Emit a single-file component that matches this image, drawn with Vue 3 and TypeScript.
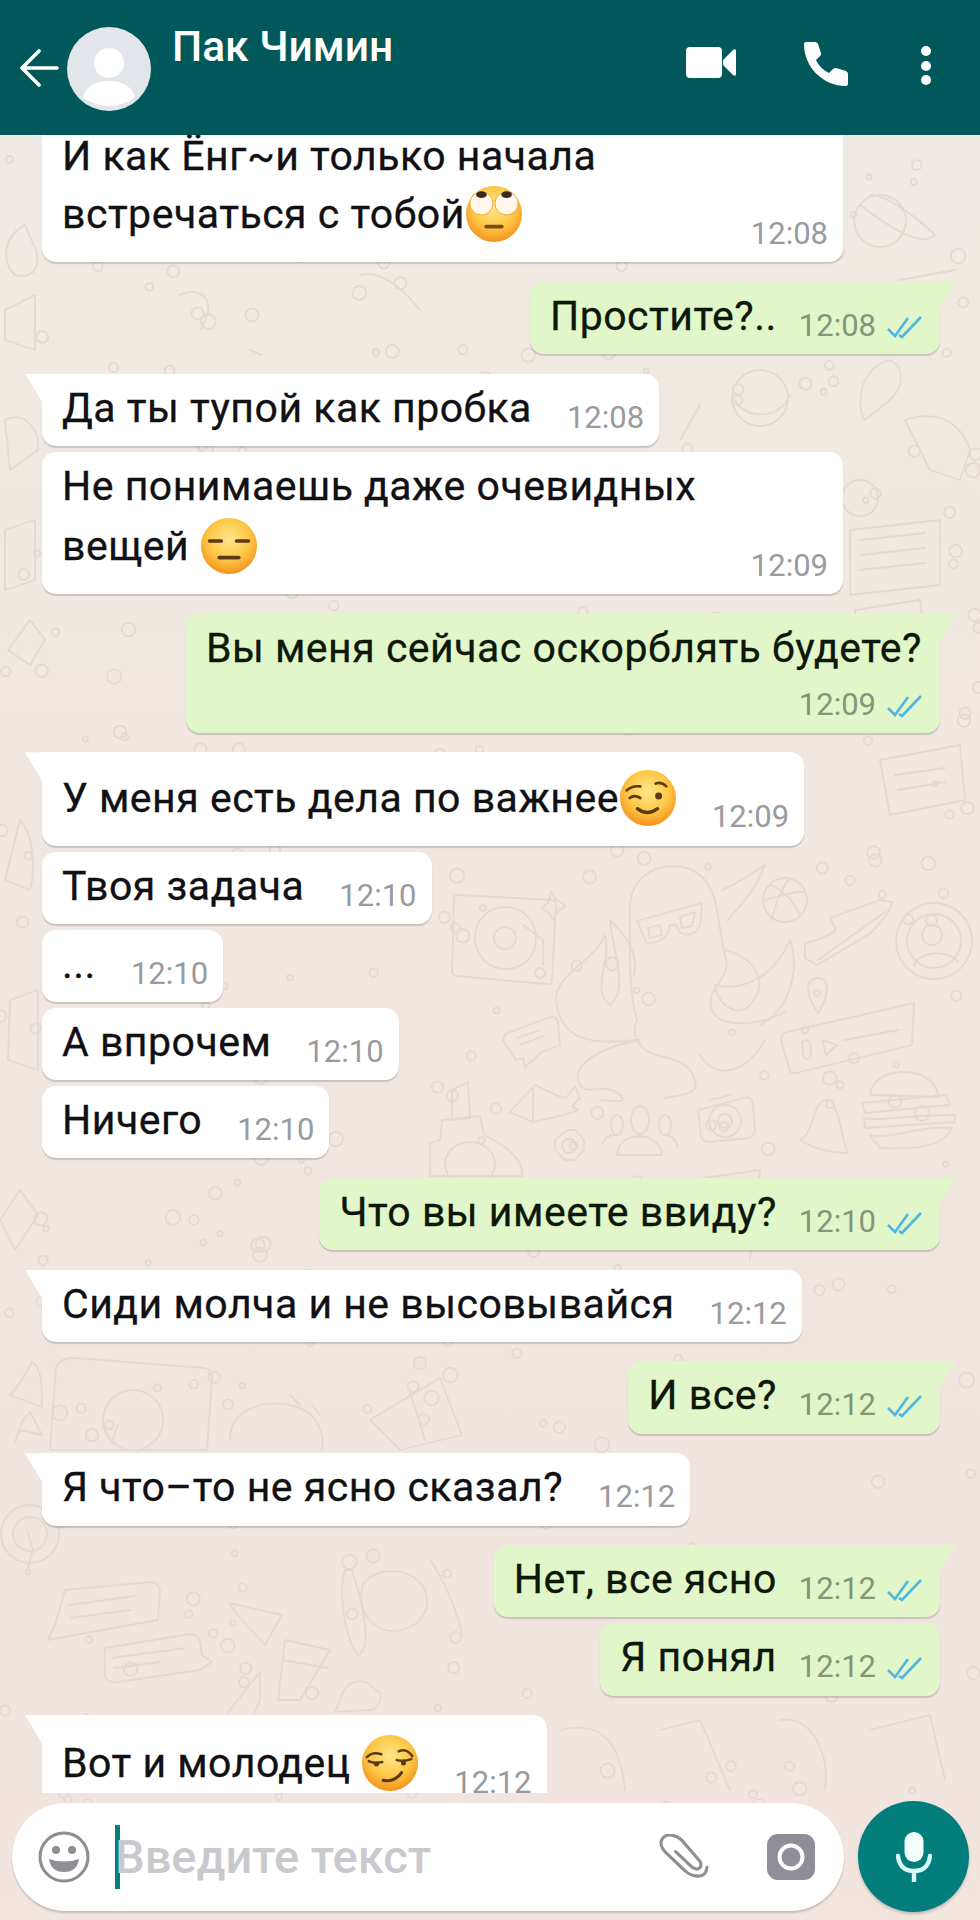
<script setup lang="ts">
type Face = 'roll' | 'flat' | 'wink' | 'smirk'

interface Message {
  id: number
  side: 'in' | 'out'
  tail?: boolean
  lines: string[]
  face?: Face
  time: string
  variant?: 'wide' | 'stack' | 'emoji' | 'last' | 'cut'
}

const messages: Message[] = [
  { id: 1, side: 'in', lines: ['И как Ёнг~и только начала', 'встречаться с тобой'], face: 'roll', time: '12:08', variant: 'cut' },
  { id: 2, side: 'out', tail: true, lines: ['Простите?..'], time: '12:08' },
  { id: 3, side: 'in', tail: true, lines: ['Да ты тупой как пробка'], time: '12:08' },
  { id: 4, side: 'in', lines: ['Не понимаешь даже очевидных', 'вещей '], face: 'flat', time: '12:09', variant: 'wide' },
  { id: 5, side: 'out', tail: true, lines: ['Вы меня сейчас оскорблять будете?'], time: '12:09', variant: 'stack' },
  { id: 6, side: 'in', tail: true, lines: ['У меня есть дела по важнее'], face: 'wink', time: '12:09', variant: 'emoji' },
  { id: 7, side: 'in', lines: ['Твоя задача'], time: '12:10' },
  { id: 8, side: 'in', lines: ['...'], time: '12:10' },
  { id: 9, side: 'in', lines: ['А впрочем'], time: '12:10' },
  { id: 10, side: 'in', lines: ['Ничего'], time: '12:10' },
  { id: 11, side: 'out', tail: true, lines: ['Что вы имеете ввиду?'], time: '12:10' },
  { id: 12, side: 'in', tail: true, lines: ['Сиди молча и не высовывайся'], time: '12:12' },
  { id: 13, side: 'out', tail: true, lines: ['И все?'], time: '12:12' },
  { id: 14, side: 'in', tail: true, lines: ['Я что–то не ясно сказал?'], time: '12:12' },
  { id: 15, side: 'out', tail: true, lines: ['Нет, все ясно'], time: '12:12' },
  { id: 16, side: 'out', lines: ['Я понял'], time: '12:12' },
  { id: 17, side: 'in', tail: true, lines: ['Вот и молодец '], face: 'smirk', time: '12:12', variant: 'last' },
]

// wallpaper doodles, page coordinates
const doodles: string[] = [
  // turntable
  'M458 895 L552 900 Q556 900 556 905 L552 980 Q552 985 546 984 L456 976 Q452 975 452 970 L454 899 Q454 895 458 895 Z',
  'M505 907 C524 907 536 922 536 938 C536 958 522 969 505 969 C488 969 475 955 475 938 C475 920 488 907 505 907 Z',
  'M505 927 a11 11 0 1 0 .1 0 Z M523 925 L543 940 L543 965 M540 968 a5 5 0 1 0 .1 0 Z',
  'M551 892 L556 899 L566 906 L558 911 L553 920 L548 912 L541 908 L548 903 Z',
  // octopus
  'M637 1020 C628 990 630 950 630 905 C631 882 650 866 672 866 C700 866 712 885 716 905 C720 925 722 945 727 965 C724 985 705 990 712 1010 C720 1030 760 1025 785 1012',
  'M637 1020 C630 1035 640 1052 660 1056 C680 1060 690 1065 695 1080 C700 1095 680 1095 665 1098 M700 1055 C715 1080 745 1075 765 1040',
  'M640 1040 C610 1045 575 1060 578 1080 C582 1100 605 1080 620 1095 C630 1105 610 1100 600 1100 M635 1040 C590 1045 560 1040 556 1000 C555 975 595 960 605 935 C612 960 590 990 610 1005 C630 990 612 950 610 920 C620 930 640 950 634 975',
  'M725 950 C760 960 768 985 750 1005 C735 1020 715 1000 715 985 C735 990 770 985 790 940 C800 970 790 1010 760 1025 M728 920 C745 900 755 890 765 865 C750 875 735 885 722 890',
  // sunglasses
  'M637 921 L702 903 L700 925 C695 938 680 938 676 925 L670 925 C668 940 655 945 646 942 Z M648 928 L660 925 L662 935 L650 938 Z M680 917 L695 912 L692 926 L682 928 Z',
  // ball + shoe
  'M785 878 a22 22 0 1 0 .1 0 Z M770 885 C785 890 795 905 800 915 M790 878 C780 890 775 905 772 920 M765 900 C775 898 795 890 805 892',
  'M805 943 C820 940 830 935 836 930 L830 918 L880 900 L892 902 C890 912 880 925 868 935 L817 965 L805 958 Z M818 960 L885 912',
  // avatar ring
  'M934 903 a38 38 0 1 0 .1 0 Z M934 914 a27 27 0 1 0 .1 0 Z M932 925 a10 10 0 1 0 .1 0 Z M914 966 C918 950 950 950 958 962',
  // pin, voice note
  'M817 978 C830 978 830 995 818 1013 C806 995 804 980 817 978 Z M817 990 a3 3 0 1 0 .1 0 Z',
  'M787 1032 L914 1003 L912 1045 L796 1073 Q790 1074 789 1068 L781 1040 Q781 1034 787 1032 Z M802 1042 Q810 1036 811 1050 L810 1058 Q804 1062 803 1052 Z M822 1040 L837 1045 L826 1055 Z M845 1040 L898 1030',
  // burger
  'M870 1095 C872 1080 885 1072 905 1072 C925 1072 938 1085 938 1097 Z M862 1103 L946 1095 L950 1105 L865 1113 Z M864 1118 C880 1122 900 1115 955 1115 L955 1122 L865 1128 Z M870 1135 C890 1140 920 1125 952 1128 C945 1145 920 1150 880 1148 Z',
  // camera, bell, fish, group, gear
  'M698 1110 L744 1098 Q752 1096 753 1104 L755 1130 Q755 1136 748 1138 L710 1142 Q702 1142 701 1136 Z M725 1105 a16 16 0 1 0 .1 0 Z M725 1114 a7 7 0 1 0 .1 0 Z M710 1100 L730 1095',
  'M835 1110 C835 1098 825 1096 818 1106 C812 1120 810 1135 800 1140 C815 1150 830 1152 848 1153 C840 1135 842 1120 835 1110 Z M830 1100 a4 4 0 1 0 .1 0 Z',
  'M510 1112 L535 1085 C545 1090 560 1098 566 1098 L575 1086 L580 1098 L572 1106 L578 1110 C560 1118 545 1118 533 1122 Z M533 1088 L533 1122',
  'M640 1106 a9 14 0 1 0 .1 0 Z M617 1115 a6 10 0 1 0 .1 0 Z M665 1115 a6 10 0 1 0 .1 0 Z M617 1155 C618 1130 660 1130 662 1155 Z M602 1144 Q606 1134 618 1135 M664 1135 Q675 1135 678 1148',
  'M567 1130 L575 1130 L584 1140 L584 1150 L575 1160 L565 1160 L555 1150 L555 1140 Z M569 1139 a7 7 0 1 0 .1 0 Z',
  'M505 1034 L550 1017 Q556 1016 558 1022 L560 1045 L542 1052 L525 1067 L523 1058 L516 1060 L503 1040 Z M517 1038 L540 1030 M520 1045 L544 1036',
  'M452 1090 L452 1120 L470 1118 L468 1082 Z M440 1140 L442 1120 L480 1116 L484 1135 C505 1145 525 1160 522 1176 L430 1176 L430 1143 Z M470 1142 a25 22 0 1 0 .1 0 Z',
  // bottom-left group
  'M75 1358 L205 1368 Q212 1370 212 1378 L207 1450 L50 1450 L56 1368 Q58 1358 75 1358 Z M133 1390 a30 30 0 1 0 .1 0 Z M112 1442 L118 1425',
  'M10 1395 C20 1385 28 1370 32 1362 C42 1368 42 1385 42 1407 Z M30 1412 L42 1435 L20 1430 L15 1442 L22 1422 Z',
  'M230 1440 C230 1410 260 1400 290 1405 C315 1410 325 1430 322 1450 M290 1395 L300 1405 M312 1405 L320 1415',
  'M370 1420 L440 1378 L462 1435 L400 1450 Z M410 1392 L425 1440',
  'M30 1505 a29 29 0 1 0 .1 0 Z M30 1517 a17 17 0 1 0 .1 0 Z M27 1530 L33 1550 L27 1570',
  'M65 1590 L150 1582 Q158 1582 160 1590 L158 1620 L75 1635 L48 1640 L55 1625 Z M68 1605 L135 1596 M70 1618 L130 1610',
  'M105 1648 L190 1634 Q198 1634 200 1642 L202 1655 L212 1662 L200 1670 L118 1682 Q108 1684 105 1676 Z M112 1658 L185 1648 M114 1668 L160 1662',
  'M229 1603 L282 1615 L265 1645 L240 1618 Z M285 1640 L330 1650 L300 1700 L278 1700 Z M282 1660 L328 1668',
  'M362 1590 C362 1570 410 1560 425 1590 C435 1620 405 1635 385 1630 C370 1625 358 1610 362 1590 Z M345 1570 C338 1590 345 1640 358 1655 C372 1650 365 1610 352 1570 Z M430 1560 C445 1580 460 1620 462 1635',
  'M175 1780 L260 1672 L260 1700 L225 1780 Z M340 1700 C345 1680 365 1675 375 1690 C385 1690 380 1710 370 1710 L335 1712 Z',
  // upper right column
  'M880 195 a26 26 0 1 0 .1 0 Z M860 205 C880 220 920 250 935 235 C925 225 890 195 870 195',
  'M888 360 C905 365 905 385 890 400 L865 420 C855 405 860 370 888 360 Z M905 420 C935 410 960 420 970 450 L960 480 L930 470 Z',
  'M860 480 a18 18 0 1 0 .1 0 Z M850 530 L940 520 L940 585 L850 595 Z M860 540 L925 533 M860 555 L925 548 M860 570 L925 563',
  'M855 610 L920 600 L925 640 L860 650 Z M880 760 L960 745 L965 800 L890 815 Z M895 775 L945 768 M898 790 L945 782',
  // left margin bits
  'M25 225 C5 235 0 260 15 275 C35 280 40 265 36 250 Z M5 310 L35 295 L35 350 L5 340 Z',
  'M5 420 C25 410 40 430 38 450 L10 470 Z M5 530 L35 520 L35 580 L5 590 Z',
  'M30 620 L45 640 L30 665 L8 650 Z M20 820 C30 830 38 860 30 890 L5 880 Z M10 1000 L38 990 L38 1070 L8 1060 Z M20 1190 L38 1215 L15 1250 L0 1220 Z',
  // gaps between bubbles
  'M180 295 C200 285 220 300 200 330 M360 275 C380 270 400 285 420 310 M250 350 L262 355',
  'M760 370 a28 28 0 1 0 .1 0 Z M735 400 C745 420 780 420 790 395 M700 405 L680 440 M900 280 L955 270',
  'M690 1180 L760 1170 L750 1260 M560 1730 C600 1720 620 1740 625 1790 M660 1730 L700 1720 L730 1790 M780 1720 C810 1715 830 1750 825 1790 M870 1730 L930 1715 L945 1780',
]

// small bubbles sprinkled over the wallpaper, same seed every time
function makeDots(count: number) {
  const dots: { x: number; y: number; r: number }[] = []
  let seed = 42
  const next = () => {
    seed = (seed * 16807) % 2147483647
    return seed / 2147483647
  }
  for (let i = 0; i < count; i++) {
    dots.push({ x: next() * 980, y: 135 + next() * 1680, r: 2.5 + next() * 5 })
  }
  return dots
}

const dots = makeDots(420)
</script>

<template>
  <div class="phone">
    <svg class="wallpaper" width="980" height="1920" viewBox="0 0 980 1920" aria-hidden="true">
      <g fill="none" stroke="#e3d9d1" stroke-width="1.8" stroke-linecap="round" stroke-linejoin="round">
        <circle v-for="(dot, i) in dots" :key="i" :cx="dot.x" :cy="dot.y" :r="dot.r" />
        <path v-for="(d, i) in doodles" :key="'d' + i" :d="d" />
      </g>
    </svg>

    <header class="topbar">
      <svg class="topbar__back" width="40" height="38" viewBox="0 0 40 38" aria-hidden="true">
        <path d="M38 19H3M20 2 3 19l17 17" fill="none" stroke="#fff" stroke-width="3.6" stroke-linecap="round" stroke-linejoin="round" />
      </svg>
      <svg class="topbar__avatar" width="84" height="84" viewBox="0 0 84 84" aria-hidden="true">
        <circle cx="42" cy="42" r="42" fill="#e2e5ea" />
        <circle cx="42" cy="36" r="15" fill="#fff" />
        <path d="M16 70c4-12 14-16 26-16s22 4 26 16a42 42 0 0 1-52 0Z" fill="#fff" />
      </svg>
      <span class="topbar__name">Пак Чимин</span>
      <div class="topbar__actions">
        <svg width="50" height="31" viewBox="0 0 50 31" aria-hidden="true">
          <rect x="0" y="0" width="36" height="31" rx="4" fill="#fff" />
          <path d="M38 12 47 3q3-2 3 1v23q0 3-3 1l-9-9q-1-1-1-2v-3q0-1 1-2Z" fill="#fff" />
        </svg>
        <svg width="44" height="44" viewBox="0 0 44 44" aria-hidden="true">
          <path d="M2 0h9q2 0 3 2l3 9q.5 2-1 3l-4 4c3 6 7 10 13 13l4-4q1-1 3-1l10 3q2 1 2 3v10q0 2-2 2C19 44 0 25 0 2q0-2 2-2Z" fill="#fff" />
        </svg>
        <svg class="topbar__menu" width="10" height="40" viewBox="0 0 10 40" aria-hidden="true">
          <circle cx="5" cy="5" r="5" fill="#fff" /><circle cx="5" cy="20" r="5" fill="#fff" /><circle cx="5" cy="34" r="5" fill="#fff" />
        </svg>
      </div>
    </header>

    <main class="chat">
      <div
        v-for="msg in messages"
        :key="msg.id"
        class="bubble"
        :class="[
          `bubble--${msg.side}`,
          { 'bubble--tail': msg.tail },
          msg.variant ? `bubble--${msg.variant}` : '',
        ]"
      >
        <div class="bubble__text">
          <div v-for="(line, i) in msg.lines" :key="i" class="bubble__line">
            <span>{{ line }}</span>
            <svg v-if="msg.face && i === msg.lines.length - 1" class="emoji" viewBox="0 0 60 60" aria-hidden="true">
              <defs>
                <radialGradient :id="'face' + msg.id" cx="50%" cy="38%" r="62%">
                  <stop offset="0" stop-color="#ffe68a" />
                  <stop offset="0.6" stop-color="#fdc745" />
                  <stop offset="1" stop-color="#f2921f" />
                </radialGradient>
              </defs>
              <circle cx="30" cy="30" r="29" :fill="`url(#face${msg.id})`" />
              <g v-if="msg.face === 'roll'">
                <circle cx="17" cy="19" r="12" fill="#fff8e8" stroke="#e9a93a" />
                <circle cx="43" cy="19" r="12" fill="#fff8e8" stroke="#e9a93a" />
                <ellipse cx="17" cy="10" rx="5.5" ry="3.5" fill="#3a2a20" />
                <ellipse cx="43" cy="10" rx="5.5" ry="3.5" fill="#3a2a20" />
                <rect x="20" y="41" width="20" height="4" rx="2" fill="#7d4a12" />
              </g>
              <g v-else-if="msg.face === 'flat'">
                <rect x="8" y="23" width="16" height="3.6" rx="1.8" fill="#5d3a14" />
                <rect x="36" y="23" width="16" height="3.6" rx="1.8" fill="#5d3a14" />
                <rect x="18" y="40" width="24" height="4" rx="2" fill="#5d3a14" />
              </g>
              <g v-else-if="msg.face === 'wink'" fill="none" stroke="#5d3a14" stroke-width="2.8" stroke-linecap="round">
                <path d="M8 22q6-5 14-4M11 30q5-4 11 0" />
                <path d="M38 15q6-2 11 3" />
                <circle cx="41" cy="28" r="3.6" fill="#5d3a14" stroke="none" />
                <path d="M19 41q10 8 21 0" stroke-width="3.4" />
              </g>
              <g v-else fill="none" stroke="#5d3a14" stroke-width="2.6" stroke-linecap="round">
                <path d="M6 24q6-6 15-3M39 18q8-4 14 5" />
                <path d="M8 28q6 3 14 1M37 27q7 2 15-1" />
                <circle cx="16" cy="31" r="2.6" fill="#5d3a14" stroke="none" />
                <circle cx="44" cy="30" r="2.6" fill="#5d3a14" stroke="none" />
                <path d="M23 48q12 2 19-8" stroke-width="3.2" />
              </g>
            </svg>
          </div>
        </div>
        <div class="bubble__meta">
          <span class="bubble__time">{{ msg.time }}</span>
          <svg v-if="msg.side === 'out'" class="bubble__ticks" width="35" height="24" viewBox="0 0 35 24" aria-hidden="true">
            <path d="M1 14l7 7L21 3M12 20l3 2L34 2" fill="none" stroke="#4fb6e3" stroke-width="2.6" />
          </svg>
        </div>
      </div>
    </main>

    <footer class="composer">
      <div class="composer__field">
        <svg class="composer__smile" width="52" height="52" viewBox="0 0 52 52" aria-hidden="true">
          <circle cx="26" cy="26" r="24" fill="none" stroke="#8e8e93" stroke-width="3" />
          <circle cx="18" cy="19" r="4" fill="#8e8e93" />
          <circle cx="34" cy="19" r="4" fill="#8e8e93" />
          <path d="M11 28q15 5 30 0q-2 13-15 13T11 28Z" fill="#8e8e93" />
        </svg>
        <span class="composer__cursor" />
        <span class="composer__placeholder">Введите текст</span>
        <svg class="composer__clip" width="52" height="46" viewBox="0 0 52 46" aria-hidden="true">
          <path d="M18 19l17 16q4 3 7 1t1-7L24 7C19 2 9 0 5 5s-1 11 3 15l19 18q6 6 14 6t9-9" transform="translate(0 -1) scale(.98)" fill="none" stroke="#8e8e93" stroke-width="3.2" stroke-linecap="round" stroke-linejoin="round" />
        </svg>
        <svg class="composer__camera" width="48" height="46" viewBox="0 0 48 46" aria-hidden="true">
          <rect width="48" height="46" rx="11" fill="#8e8e96" />
          <circle cx="24" cy="23" r="11.5" fill="none" stroke="#fff" stroke-width="4" />
        </svg>
      </div>
      <button class="composer__mic" type="button" aria-label="mic">
        <svg width="36" height="50" viewBox="0 0 36 50" aria-hidden="true">
          <rect x="8.5" y="0" width="19" height="30" rx="9.5" fill="#f2ffff" />
          <path d="M2 24c1 10 7 15 16 15s15-5 16-15M18 39v10" fill="none" stroke="#d6fbf8" stroke-width="4.4" stroke-linecap="round" />
        </svg>
      </button>
    </footer>
  </div>
</template>

<style>
html, body { margin: 0; padding: 0; }
</style>

<style scoped>
.phone {
  position: relative;
  display: flex;
  flex-direction: column;
  width: 980px;
  height: 1920px;
  overflow: hidden;
  background: linear-gradient(#efebe4, #f0e7e0 45%, #f1e5de);
  font-family: Roboto, "Noto Sans", sans-serif;
}
.wallpaper {
  position: absolute;
  top: 0;
  left: 0;
}

.topbar {
  position: relative;
  z-index: 2;
  flex: none;
  display: flex;
  align-items: flex-start;
  height: 135px;
  box-sizing: border-box;
  padding: 26px 0 0 19px;
  background: #00585a;
  color: #fff;
}
.topbar__back { margin: 23px 8px 0 0; }
.topbar__avatar { margin-top: 1px; flex: none; }
.topbar__name {
  margin: 0 0 0 21px;
  font-size: 42.5px;
  font-weight: 500;
  line-height: 42px;
}
.topbar__actions {
  margin-left: auto;
  display: flex;
  align-items: flex-start;
  padding: 21px 49px 0 0;
  gap: 68px;
}
.topbar__actions svg:nth-child(2) { margin-top: -5px; }
.topbar__menu { margin-left: 5px; margin-top: -1px; }

.chat {
  position: relative;
  z-index: 1;
  flex: 1;
  min-height: 0;
  overflow: hidden;
  display: flex;
  flex-direction: column;
  padding: 0 40px 0 42px;
}
.bubble {
  position: relative;
  flex: none;
  display: flex;
  align-items: flex-end;
  gap: 35px;
  box-sizing: border-box;
  padding: 4px 15px 8.4px 20px;
  margin-top: 5.8px;
  border-radius: 14px;
  box-shadow: 0 2px 1px rgba(0, 0, 0, 0.16);
  color: #111114;
}
.bubble--in {
  align-self: flex-start;
  background: #fff;
}
.bubble--out {
  align-self: flex-end;
  background: #e2f7c9;
  color: #0e180a;
  padding-right: 18px;
  gap: 22px;
}
.bubble--tail { margin-top: 19.4px; }
.bubble--tail.bubble--in { border-top-left-radius: 0; }
.bubble--tail.bubble--out { border-top-right-radius: 0; }
.bubble--tail::before {
  content: "";
  position: absolute;
  top: 0;
  width: 18px;
  height: 30px;
  background: inherit;
}
.bubble--tail.bubble--in::before {
  left: -17px;
  clip-path: polygon(0 0, 100% 0, 100% 100%);
}
.bubble--tail.bubble--out::before {
  right: -16px;
  clip-path: polygon(0 0, 100% 0, 0 100%);
}
.bubble--cut {
  width: 801px;
  margin-top: -15px;
  justify-content: space-between;
}
.bubble--cut .bubble__line:first-child {
  margin-top: 2px;
  margin-bottom: -2px;
}
.bubble--wide {
  width: 801px;
  justify-content: space-between;
}
.bubble--cut .bubble__text,
.bubble--wide .bubble__text { padding-bottom: 10px; }
.bubble--stack {
  flex-direction: column;
  align-items: stretch;
  gap: 7px;
}
.bubble--stack .bubble__meta { align-self: flex-end; }
.bubble--emoji { padding-top: 16px; }
.bubble--emoji .bubble__text { padding-bottom: 9px; }
.bubble--last { padding-top: 18px; }
.bubble--last .bubble__text { padding-bottom: 10px; }

.bubble__text {
  font-size: 41px;
  letter-spacing: 0.5px;
  white-space: pre;
  -webkit-text-stroke: 0.3px currentColor;
}
.bubble__line {
  display: flex;
  align-items: center;
  height: 60px;
  line-height: 60px;
}
.emoji {
  flex: none;
  width: 58px;
  height: 58px;
}
.bubble__meta {
  display: flex;
  align-items: center;
  gap: 11px;
  height: 40px;
}
.bubble__time {
  font-size: 31px;
  line-height: 40px;
  color: #9a9a9f;
}
.bubble--out .bubble__time { color: #84957a; }
.bubble__ticks { margin-top: 2px; }

.composer {
  position: relative;
  z-index: 2;
  flex: none;
  display: flex;
  align-items: center;
  gap: 14px;
  height: 127px;
  box-sizing: border-box;
  padding: 8px 11px 8px 12px;
}
.composer__field {
  flex: 1;
  display: flex;
  align-items: center;
  height: 108px;
  padding: 0 29px 0 26px;
  border-radius: 54px;
  background: #fff;
  box-shadow: 0 2px 2px rgba(0, 0, 0, 0.18);
}
.composer__smile { flex: none; }
.composer__cursor {
  flex: none;
  width: 5px;
  height: 64px;
  margin: 0 -5px 0 25px;
  background: #00807f;
}
.composer__placeholder {
  flex: 1;
  font-size: 47px;
  font-weight: 500;
  color: #c9c9cd;
}
.composer__clip { flex: none; margin-right: 57px; }
.composer__camera { flex: none; }
.composer__mic {
  flex: none;
  display: flex;
  align-items: center;
  justify-content: center;
  width: 111px;
  height: 111px;
  padding: 0;
  border: none;
  border-radius: 50%;
  background: #017e7c;
  box-shadow: 0 2px 3px rgba(0, 0, 0, 0.2);
}
</style>
